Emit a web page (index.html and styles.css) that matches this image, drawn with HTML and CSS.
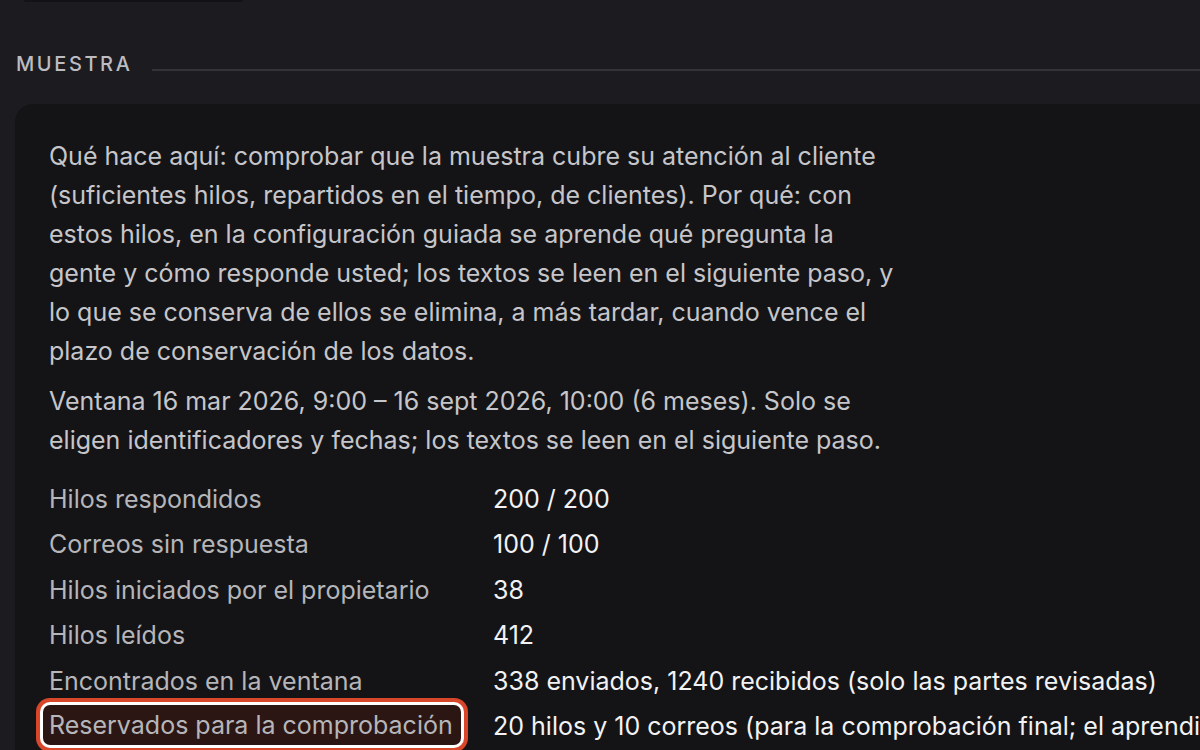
FILE: index.html
```html
<!DOCTYPE html>
<html lang="es">
<head>
<meta charset="utf-8">
<link rel="stylesheet" href="styles.css">
</head>
<body>
<div class="topbar"></div>
<section class="section">
  <div class="section-head">
    <h2 class="section-title">Muestra</h2>
    <div class="section-rule"></div>
  </div>
  <div class="card">
    <p class="text">Qué hace aquí: comprobar que la muestra cubre su atención al cliente (suficientes hilos, repartidos en el tiempo, de clientes). Por qué: con estos hilos, en la configuración guiada se aprende qué pregunta la gente y cómo responde usted; los textos se leen en el siguiente paso, y lo que se conserva de ellos se elimina, a más tardar, cuando vence el plazo de conservación de los datos.</p>
    <p class="text">Ventana 16 mar 2026, 9:00 – 16 sept 2026, 10:00 (6 meses). Solo se eligen identificadores y fechas; los textos se leen en el siguiente paso.</p>
    <div class="stats">
      <div class="label">Hilos respondidos</div><div class="value">200 / 200</div>
      <div class="label">Correos sin respuesta</div><div class="value">100 / 100</div>
      <div class="label">Hilos iniciados por el propietario</div><div class="value">38</div>
      <div class="label">Hilos leídos</div><div class="value">412</div>
      <div class="label">Encontrados en la ventana</div><div class="value">338 enviados, 1240 recibidos (solo las partes revisadas)</div>
      <div class="label"><span class="mark">Reservados para la comprobación</span></div><div class="value">20 hilos y 10 correos (para la comprobación final; el aprendizaje no los usa)</div>
    </div>
  </div>
</section>
</body>
</html>
```
FILE: styles.css
```css
html, body {
  margin: 0;
  padding: 0;
  background: #1c1b20;
  overflow: hidden;
}
body {
  width: 1200px;
  height: 750px;
  font-family: Inter, "Noto Sans", sans-serif;
  color: #c6c6ca;
}
.topbar {
  margin-left: 24px;
  width: 219px;
  height: 2px;
  background: #131317;
  border-radius: 0 0 3px 3px;
}
.section {
  padding: 0 0 0 15px;
}
.section-head {
  display: flex;
  align-items: center;
  margin-top: 49px;
  height: 26px;
}
.section-title {
  margin: 0;
  font-size: 20px;
  font-weight: 500;
  letter-spacing: 2.6px;
  text-transform: uppercase;
  color: #bcbcc2;
  padding-left: 1px;
  line-height: 26px;
}
.section-rule {
  flex: 1;
  height: 2px;
  background: #333338;
  margin-left: 20px;
  margin-top: 12px;
}
.card {
  margin-top: 27px;
  background: #141416;
  border-radius: 18px 0 0 0;
  padding: 33px 0 40px 34px;
  min-height: 700px;
}
.text {
  margin: 0 0 11px 0;
  width: 852px;
  font-size: 25px;
  line-height: 39px;
  color: #c6c6ca;
}
.stats {
  margin-top: 17px;
  display: grid;
  grid-template-columns: 444px 1fr;
  grid-auto-rows: 45.4px;
  font-size: 25px;
  line-height: 45.4px;
  white-space: nowrap;
}
.label {
  color: #b6b6ba;
}
.value {
  color: #f2f2f4;
}
.mark {
  display: inline-block;
  vertical-align: top;
  line-height: 40px;
  padding: 0 8px 0 6px;
  margin-left: -6px;
  margin-top: 1px;
  background: #2b1613;
  border-radius: 7px;
  box-shadow: 0 0 0 3px #ffffff, 0 0 0 7px #d9472b;
}
```
